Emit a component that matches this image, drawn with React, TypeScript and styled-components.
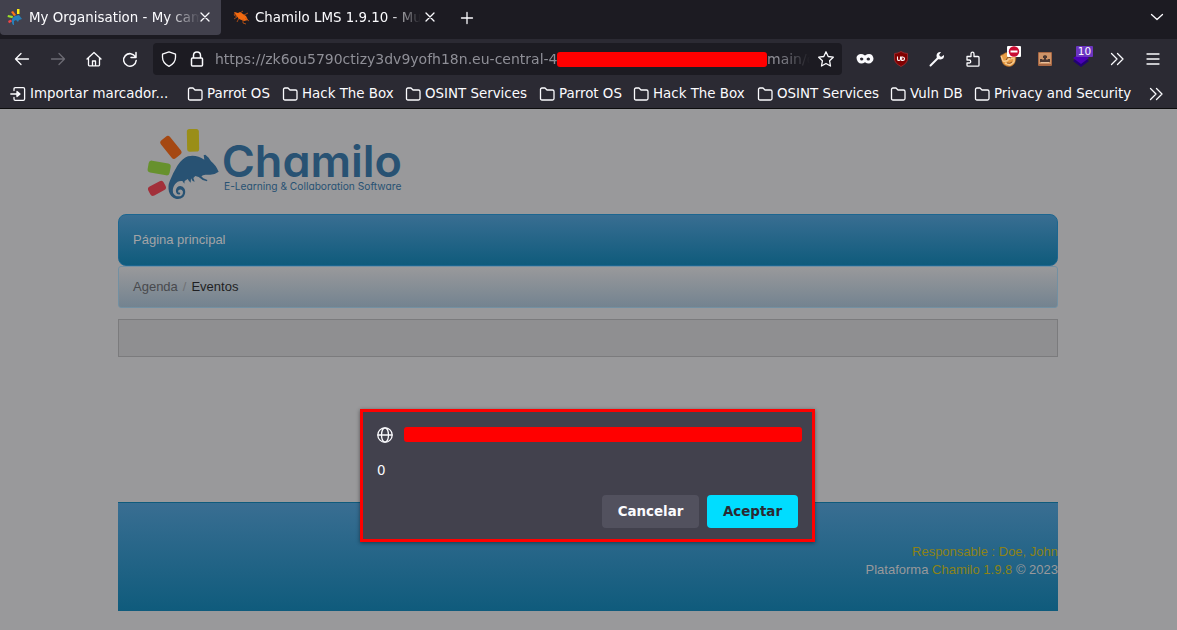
import React from "react";
import styled, { createGlobalStyle } from "styled-components";

const Global = createGlobalStyle`
  * { box-sizing: border-box; }
  body { margin: 0; background: #99999b; overflow: hidden; }
`;

const Window = styled.div`
  width: 1177px;
  height: 630px;
  display: flex;
  flex-direction: column;
  font-family: "DejaVu Sans", sans-serif;
  font-size: 13.4px;
  color: #fbfbfe;
  white-space: nowrap;
`;

const TabBar = styled.div`
  height: 39px;
  flex: none;
  display: flex;
  align-items: flex-start;
  background: #1c1b22;
`;

const Tab = styled.div<{ $active?: boolean }>`
  width: ${(p) => (p.$active ? 221 : 226)}px;
  height: 35px;
  padding: 0 8px 1px ${(p) => (p.$active ? 7 : 12)}px;
  display: flex;
  align-items: center;
  border-radius: 0 0 4px 4px;
  background: ${(p) => (p.$active ? "#42414d" : "transparent")};
`;

const TabTitle = styled.span<{ $width: number }>`
  width: ${(p) => p.$width}px;
  margin-left: 6px;
  overflow: hidden;
  padding-top: 2px;
  line-height: 20px;
  mask-image: linear-gradient(to right, #000 calc(100% - 32px), transparent);
`;

const Glyph = styled.svg`
  display: block;
  flex: none;
  overflow: visible;
`;

const TabClose = styled(Glyph)`
  margin-left: 4px;
`;

const NewTab = styled.div`
  width: 40px;
  height: 35px;
  display: flex;
  align-items: center;
  justify-content: center;
`;

const TabListButton = styled.div`
  margin-left: auto;
  width: 40px;
  height: 34px;
  display: flex;
  align-items: center;
  justify-content: center;
`;

const NavBar = styled.div`
  height: 40px;
  flex: none;
  display: flex;
  align-items: center;
  background: #2b2a33;
  padding: 0 6px 0 4px;
`;

const NavButton = styled.div`
  width: 36px;
  height: 32px;
  flex: none;
  position: relative;
  display: flex;
  align-items: center;
  justify-content: center;
`;

const UrlBar = styled.div`
  width: 689px;
  height: 32px;
  margin: 0 5px;
  padding: 0 8px;
  flex: none;
  display: flex;
  align-items: center;
  gap: 12px;
  border-radius: 4px;
  background: #1c1b22;
`;

const Address = styled.div`
  width: 599px;
  margin: 0 -4px 0 -6px;
  padding-left: 4px;
  display: flex;
  align-items: center;
  overflow: hidden;
  line-height: 20px;
  font-size: 14px;
  color: #8f8f97;
  mask-image: linear-gradient(to right, #000 calc(100% - 32px), transparent);
`;

const Host = styled.span`
  width: 342px;
  flex: none;
`;

const Redaction = styled.span<{ $width: number }>`
  width: ${(p) => p.$width}px;
  height: 15px;
  flex: none;
  border-radius: 3px;
  background: #ff0000;
`;

const Badge = styled.span`
  position: absolute;
  left: 13px;
  top: 3px;
  width: 17px;
  height: 11px;
  background: #6b35c0;
  border-radius: 1px;
  font-size: 10.5px;
  line-height: 11px;
  text-align: center;
`;

const BlockBadge = styled(Glyph)`
  position: absolute;
  left: 16px;
  top: 3px;
`;

const Bookmarks = styled.div`
  height: 30px;
  flex: none;
  display: flex;
  align-items: flex-start;
  padding: 4px 13px 0 10px;
  background: #2b2a33;
  border-bottom: 1px solid #0c0c0d;
`;

const Bookmark = styled.div<{ $width: number }>`
  width: ${(p) => p.$width}px;
  height: 21px;
  flex: none;
  display: flex;
  align-items: center;
  gap: 4px;
  line-height: 21px;
`;

const More = styled.div`
  margin-left: auto;
  height: 21px;
  display: flex;
  align-items: center;
`;

const Page = styled.main`
  flex: 1;
  width: 940px;
  margin-left: 118px;
  font-family: "Liberation Sans", Arial, sans-serif;
  font-size: 13px;
  line-height: 18px;
`;

const Header = styled.header`
  height: 105px;
  padding: 11px 0 0 22px;
`;

const MainMenu = styled.nav`
  height: 52px;
  padding: 16px 14px;
  border: 1px solid #1c6690;
  border-radius: 8px;
  background: linear-gradient(#396e92, #0f5b7c);
  color: #a3a4a6;
`;

const Breadcrumb = styled.div`
  height: 42px;
  padding: 11px 14px;
  display: flex;
  gap: 5px;
  border: 1px solid #7390a2;
  border-radius: 3px;
  background: linear-gradient(#99999b, #738390);
  color: #48494d;
`;

const Separator = styled.span`
  color: #707174;
`;

const Current = styled.span`
  color: #1f1f23;
`;

const Toolbar = styled.div`
  height: 38px;
  margin-top: 11px;
  border: 1px solid #7b7b7d;
  background: #8f8f91;
`;

const Footer = styled.footer`
  height: 109px;
  margin-top: 145px;
  padding-top: 40px;
  border-top: 1px solid #0f5b7c;
  background: linear-gradient(#396e92, #0f5b7c);
  color: #99999b;
  text-align: right;
`;

const Accent = styled.span`
  color: #8c8218;
`;

const Dialog = styled.section`
  position: absolute;
  left: 360px;
  top: 409px;
  width: 455px;
  height: 133px;
  padding: 14px 10px 0 14px;
  border: 3px solid #ff0000;
  background: #42414d;
  box-shadow: 0 1px 4px rgba(0, 0, 0, 0.45);
`;

const Origin = styled.div`
  height: 17px;
  display: flex;
  align-items: center;
  gap: 11px;
`;

const Message = styled.p`
  margin: 18px 0 0;
  height: 20px;
  line-height: 20px;
`;

const Actions = styled.div`
  margin-top: 14px;
  padding-right: 4px;
  display: flex;
  justify-content: flex-end;
  gap: 8px;
`;

const Button = styled.button<{ $primary?: boolean }>`
  width: ${(p) => (p.$primary ? 91 : 97)}px;
  height: 33px;
  padding: 0;
  border: 0;
  border-radius: 4px;
  background: ${(p) => (p.$primary ? "#00ddff" : "#52515e")};
  color: ${(p) => (p.$primary ? "#2b2a33" : "#fbfbfe")};
  font: bold 13.4px "DejaVu Sans", sans-serif;
`;

const line = {
  fill: "none",
  stroke: "#fbfbfe",
  strokeWidth: 1.3,
  strokeLinecap: "round" as const,
  strokeLinejoin: "round" as const,
};

function Icon({ d, size = 16, color = "#fbfbfe", width = 1.3 }: { d: string; size?: number; color?: string; width?: number }) {
  return (
    <Glyph width={size} height={size} viewBox="0 0 16 16" {...line} stroke={color} strokeWidth={width}>
      <path d={d} />
    </Glyph>
  );
}

const FOLDER = "M1.5 12.5v-9q0-1.5 1.5-1.5h3l2 2h5.5q1.5 0 1.5 1.5v7q0 1.5-1.5 1.5H3q-1.5 0-1.5-1.5z";
const CHEVRONS = "M2.5 2.5 8 8l-5.5 5.5M8.5 2.5 14 8l-5.5 5.5";

const CHAMELEON =
  "M191 106 L196 104 L206 113 L213 124 Q227 135 236 155 Q226 163 211 164 L196 164 Q188 165 184 169 L190 175 L202 180 L201 184 Q187 182 176 171 L166 168 L160 174 L164 185 L158 183 L153 175 L152 188 L147 183 L143 177 L134 183 L133 191 L127 183 Q113 181 105 193 Q96 205 99 218 Q104 229 115 229 Q129 229 129 215 Q126 207 118 209 Q112 212 116 218 Q123 217 120 223 Q111 226 108 216 Q106 205 116 199 Q128 196 134 207 Q139 220 130 231 Q120 239 107 236 Q92 232 87 215 Q83 198 89 184 Q99 158 112 137 Q128 114 144 109 Q169 103 193 119 Z";

const folders: [string, number][] = [
  ["Parrot OS", 95],
  ["Hack The Box", 123],
  ["OSINT Services", 134],
  ["Parrot OS", 94],
  ["Hack The Box", 124],
  ["OSINT Services", 133],
  ["Vuln DB", 84],
  ["Privacy and Security", 160],
];

function Favicon() {
  return (
    <Glyph width="16" height="16" viewBox="0 0 16 16">
      <path d="M10 0h2.5v5H10z" fill="#ffee16" />
      <path d="m4 3 2-1 3 4-2 1z" fill="#fb7516" />
      <path d="m1 6 5 1-.5 2.2L.5 8z" fill="#9cdf28" />
      <path d="m1 12 3-1.5 1 2-3 1.8z" fill="#f04545" />
      <path d="M5 14q-1-5 3-7l4-1 3 4-3 1-1 2-2-2-2 1v4H6z" fill="#267fb8" />
    </Glyph>
  );
}

function Bug() {
  return (
    <Glyph width="16" height="16" viewBox="0 0 16 16">
      <path d="m1 3 4 1 2-1 6 4 2 4-4 1-5-2-4-5z" fill="#f36a10" />
      <path d="M3 3 1 6l3 2-3 2M6 9l-2 4M10 10v4l3 1M7 4l3-2M11 6l4-2M12 9l4 3" fill="none" stroke="#c95512" strokeWidth="0.8" />
    </Glyph>
  );
}

const Wordmark = styled.g`
  fill: #285273;
  font-family: Inter, "Liberation Sans", sans-serif;
  font-feature-settings: "cv11" 1, "ss03" 1;
`;

function Logo() {
  return (
    <Glyph width="270" height="85" viewBox="0 0 810 255">
      <rect x="141" y="27" width="36" height="68" rx="8" fill="#9a8e18" transform="rotate(-1 159 61)" />
      <rect x="75" y="48" width="35" height="69" rx="9" fill="#a54812" transform="rotate(-39 92 82)" />
      <rect x="40" y="110" width="36" height="67" rx="9" fill="#67912d" transform="rotate(-80 58 144)" />
      <rect x="36" y="179" width="30" height="52" rx="9" fill="#a2303a" transform="rotate(62 51 205)" />
      <path d={CHAMELEON} fill="#285273" />
      <Wordmark>
        <text x="245" y="171" fontSize="132" fontWeight="600" textLength="541" lengthAdjust="spacingAndGlyphs">Chamilo</text>
        <text x="252" y="209" fontSize="32" textLength="532" lengthAdjust="spacingAndGlyphs">E-Learning &amp; Collaboration Software</text>
      </Wordmark>
    </Glyph>
  );
}

export default function App() {
  return (
    <Window>
      <Global />
      <TabBar>
        <Tab $active>
          <Favicon />
          <TabTitle $width={171}>My Organisation - My campus</TabTitle>
          <Glyph width="10" height="10" viewBox="0 0 10 10" {...line}><path d="m1 1 8 8M9 1 1 9" /></Glyph>
        </Tab>
        <Tab>
          <Bug />
          <TabTitle $width={166}>Chamilo LMS 1.9.10 - Multiple</TabTitle>
          <TabClose width="10" height="10" viewBox="0 0 10 10" {...line}><path d="m1 1 8 8M9 1 1 9" /></TabClose>
        </Tab>
        <NewTab><Icon d="M8 2.5v11M2.5 8h11" /></NewTab>
        <TabListButton><Icon d="m2.5 5.5 5.5 5 5.5-5" /></TabListButton>
      </TabBar>

      <NavBar>
        <NavButton><Icon d="M7 2.5 1.5 8 7 13.5M1.5 8h13" /></NavButton>
        <NavButton><Icon color="#6c6b74" d="m9 2.5 5.5 5.5L9 13.5M14.5 8h-13" /></NavButton>
        <NavButton><Icon d="m1 8 7-6.5L15 8M2.5 7v7q0 .8.8.8h9.4q.8 0 .8-.8V7M6.500 14.500V10h3v4.500" /></NavButton>
        <NavButton><Icon d="M14 1.500v5H9M13.500 6A6.300 6.300 0 1 0 14.200 9.500" width={1.5} /></NavButton>
        <UrlBar>
          <Icon d="M8 .8 14.500 3.200v3Q14.500 12 8 15.300 1.500 12 1.500 6.200v-3z" />
          <Icon d="M4.500 7V4.500q0-3.500 3.500-3.500t3.500 3.500V7M3.500 7h9q1 0 1 1v6q0 1-1 1h-9q-1 0-1-1V8q0-1 1-1z" width={1.5} />
          <Address>
            <Host>https://zk6ou5790ctizy3dv9yofh18n.eu-central-4</Host>
            <Redaction $width={210} />
            <span>main/calendar</span>
          </Address>
          <Icon d="m8 .8 2.200 4.700 5.100.7-3.700 3.600.9 5.200L8 12.500 3.500 15l.9-5.200L.7 6.200l5.100-.7z" />
        </UrlBar>
        <NavButton>
          <Glyph width="16" height="10" viewBox="0 0 16 10">
            <path d="M8 1.500Q4-1 1 1T1 8q3 3 7 .2Q12 11 15 8t0-7Q12-1 8 1.500zM4.800 3.500Q5.800 3.500 6.500 5 5.800 6.500 4.600 6.500T3 5 4.800 3.500zm6.600 0Q13 3.500 13 5t-1.600 1.500T9.500 5q.6-1.500 1.900-1.500z" fill="#fbfbfe" fillRule="evenodd" />
          </Glyph>
        </NavButton>
        <NavButton>
          <Glyph width="16" height="16" viewBox="0 0 16 16">
            <path d="M8 .5q3 2 6.500 2V8q0 4-6.500 7.500Q1.500 12 1.500 8V2.500Q5 2.500 8 .5z" fill="#800000" stroke="#92292d" />
            <path d="M4.500 5.500v2.700q0 1.300 1.500 1.300T7.500 8V5.500M8.700 6v3.500h1q1.800 0 1.800-1.700T9.700 6z" fill="none" stroke="#fff" strokeWidth="1.1" />
          </Glyph>
        </NavButton>
        <NavButton>
          <Glyph width="16" height="16" viewBox="0 0 16 16">
            <path d="M1.500 14.500 9 7" stroke="#fbfbfe" strokeWidth="2" strokeLinecap="round" />
            <path d="M12 1Q8 .5 7.500 4.500L8 8l3.500.5q4-.5 3.500-4.500l-3 2-2-2z" fill="#fbfbfe" />
          </Glyph>
        </NavButton>
        <NavButton><Icon d="M2 5.500h4V3q0-1.800 1.500-1.800T9 3v2.500h4q1 0 1 1v7.700q0 1-1 1H3q-1 0-1-1V12h2.200q1.500 0 1.500-1.500T4.200 9H2z" /></NavButton>
        <NavButton>
          <Glyph width="18" height="16" viewBox="0 0 18 16">
            <path d="M2 4Q9-2 16 5q0 10-7 10.500Q3 15 2 10L.8 4z" fill="#e89c45" stroke="#a86528" strokeWidth=".7" />
            <path d="m1 5 2 5q4 1 6-2l5-1v4l-4 3-5-2" fill="none" stroke="#f6cb91" strokeWidth="1.4" />
            <path d="m6 9 2-3 3 1m-4 5q3 1 5-1" fill="none" stroke="#8a5228" />
          </Glyph>
          <BlockBadge width="14" height="11" viewBox="0 0 14 11">
            <rect width="14" height="11" rx="1" fill="#fff" />
            <circle cx="7" cy="5.500" r="5.200" fill="#c90b32" />
            <path d="M3.500 5.500h7" stroke="#fff" strokeWidth="2" />
          </BlockBadge>
        </NavButton>
        <NavButton>
          <Glyph width="14" height="14" viewBox="0 0 14 14">
            <rect width="14" height="14" rx="1" fill="#a96844" />
            <rect x="1" y="1" width="12" height="11" fill="#cf9468" />
            <path d="M2 7h2l1 1 1-1V6H5V4l2-1 2 1v2H8v1l1 1 1-1h2v3H2z" fill="#4c3832" />
            <path d="M3 10.500h8" stroke="#e8c09d" />
          </Glyph>
        </NavButton>
        <NavButton>
          <Glyph width="16" height="16" viewBox="0 0 16 16">
            <path d="m0 10 3-2 5 3 5-3 3 2-8 6z" fill="#220075" />
            <path d="m0 7 8-5 8 5-8 6z" fill="#4b00b5" />
          </Glyph>
          <Badge>10</Badge>
        </NavButton>
        <NavButton><Icon d={CHEVRONS} /></NavButton>
        <NavButton><Icon d="M2 3h12M2 8h12M2 13h12" /></NavButton>
      </NavBar>

      <Bookmarks>
        <Bookmark $width={177}>
          <Icon d="M4 4.500V3q0-1.300 1.300-1.300h8q1.300 0 1.300 1.300v10q0 1.300-1.300 1.300h-8Q4 14.300 4 13v-1.500M.8 8H9M7 5.500 10 8l-3 2.500z" />
          Importar marcador...
        </Bookmark>
        {folders.map(([name, width], i) => (
          <Bookmark key={i} $width={width}>
            <Icon d={FOLDER} />
            {name}
          </Bookmark>
        ))}
        <More><Icon d={CHEVRONS} /></More>
      </Bookmarks>

      <Page>
        <Header><Logo /></Header>
        <MainMenu>Página principal</MainMenu>
        <Breadcrumb>
          <span>Agenda</span>
          <Separator>/</Separator>
          <Current>Eventos</Current>
        </Breadcrumb>
        <Toolbar />
        <Footer>
          <Accent>Responsable : Doe, John</Accent>
          <div>Plataforma <Accent>Chamilo 1.9.8</Accent> © 2023</div>
        </Footer>
      </Page>

      <Dialog>
        <Origin>
          <Glyph width="16" height="16" viewBox="0 0 16 16" {...line}>
            <circle cx="8" cy="8" r="7.2" />
            <ellipse cx="8" cy="8" rx="3.5" ry="7.2" />
            <path d="M1 8h14" />
          </Glyph>
          <Redaction $width={398} />
        </Origin>
        <Message>0</Message>
        <Actions>
          <Button>Cancelar</Button>
          <Button $primary>Aceptar</Button>
        </Actions>
      </Dialog>
    </Window>
  );
}
